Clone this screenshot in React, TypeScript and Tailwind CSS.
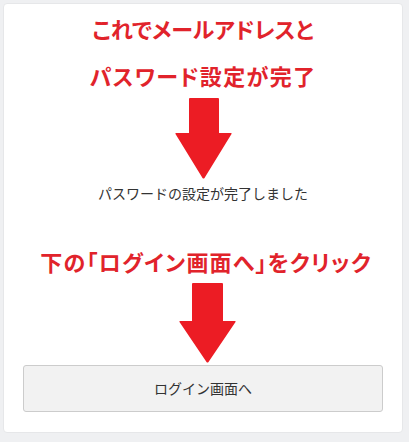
import React from "react";

const jp = { fontFamily: '"Noto Sans CJK JP", "Noto Sans", sans-serif' };

export default function App() {
  return (
    <div className="w-[409px] h-[442px] bg-[#eff0f2] p-[3px]" style={jp}>
      <div className="w-[400px] h-[430px] bg-white rounded-[4px] border border-[#e6e7e9] flex flex-col items-center px-[19px] pt-[1px]">
        <div className="flex flex-col items-center text-[#e1232b] font-bold leading-[47px] [font-feature-settings:'palt']">
          <div className="text-[22px] tracking-[0px]">これでメールアドレスと</div>
          <div className="text-[22px] tracking-[1.3px]">パスワード設定が完了</div>
        </div>
        <svg width="57" height="81" viewBox="0 0 57 81" className="-mt-[1px] shrink-0">
          <path d="M15 0 H43 Q44 0 44 1 V35 H56 Q57 35 56.5 36 L29.5 80 Q28.5 81 27.5 80 L0.5 36 Q0 35 1 35 H14 V1 Q14 0 15 0 Z" fill="#ec1c24" />
        </svg>
        <div className="mt-[4px] h-[20px] leading-[20px] text-[14px] text-[#333333]">
          パスワードの設定が完了しました
        </div>
        <div className="mt-[43px] h-[30px] leading-[30px] text-[22px] font-bold tracking-[1.2px] text-[#e1232b] ml-[6px] [font-feature-settings:'palt']">
          下の「ログイン画面へ」をクリック
        </div>
        <svg width="57" height="80" viewBox="0 0 57 80" className="mt-[7px] ml-[9px] shrink-0">
          <path d="M14 0 H43 Q44 0 44 1 V38 H56 Q57 38 56.5 39 L29.5 79 Q28.5 80 27.5 79 L0.5 39 Q0 38 1 38 H13 V1 Q13 0 14 0 Z" fill="#ec1c24" />
        </svg>
        <button className="mt-[2px] w-[360px] h-[47px] shrink-0 bg-[#f2f2f2] border border-[#cccccc] rounded-[3px] text-[14px] text-[#333333] flex items-center justify-center">
          ログイン画面へ
        </button>
      </div>
    </div>
  );
}
